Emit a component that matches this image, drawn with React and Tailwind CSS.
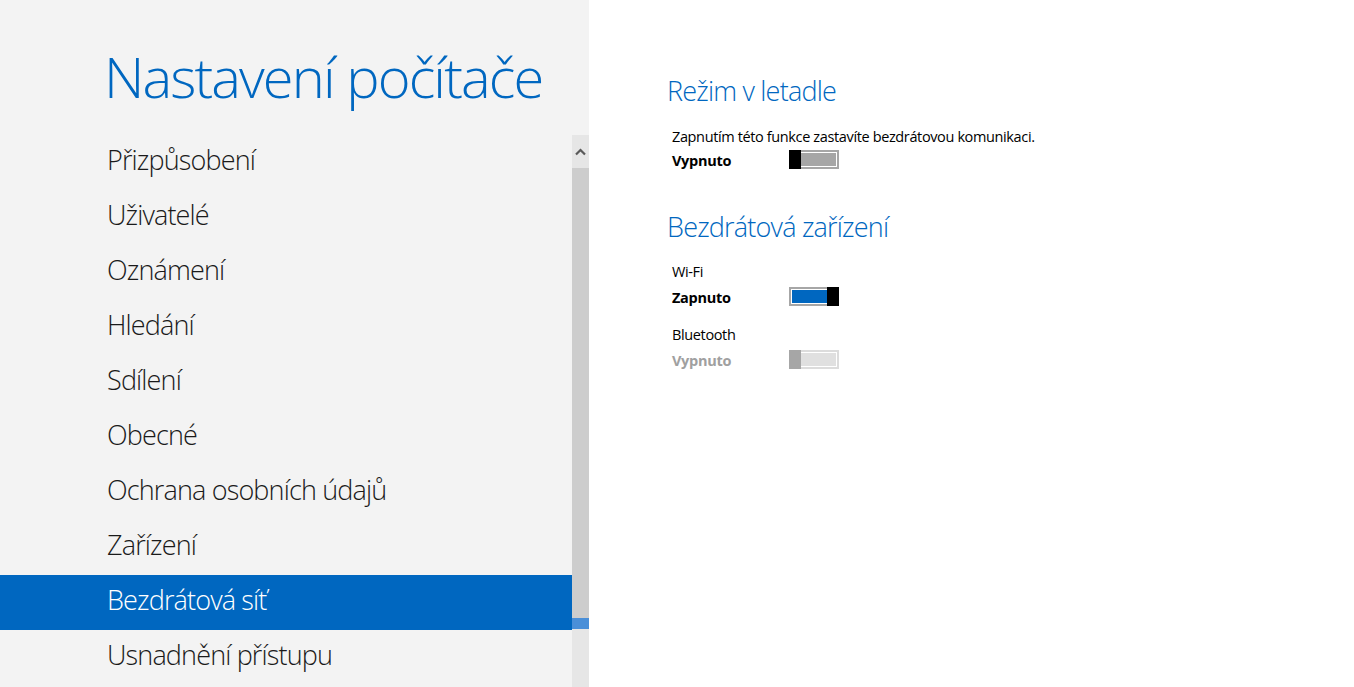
import React from "react";

const navItems = [
  "Přizpůsobení",
  "Uživatelé",
  "Oznámení",
  "Hledání",
  "Sdílení",
  "Obecné",
  "Ochrana osobních údajů",
  "Zařízení",
  "Bezdrátová síť",
  "Usnadnění přístupu",
];

function Toggle({ on, disabled }) {
  const border = disabled ? "border-[#dcdcdc]" : "border-[#a6a6a6]";
  const thumb = disabled ? "bg-[#a6a6a6]" : "bg-black";
  const fill = on ? "bg-[#0067c0]" : disabled ? "bg-[#e0e0e0]" : "bg-[#a6a6a6]";
  if (on) {
    return (
      <div className="flex h-[19px] w-[50px]">
        <div className={`flex-1 border-2 border-r-0 ${border} bg-white py-[1px] pl-[1px]`}>
          <div className={`h-full w-full ${fill}`} />
        </div>
        <div className={`h-full w-[12px] ${thumb}`} />
      </div>
    );
  }
  return (
    <div className="flex h-[19px] w-[50px]">
      <div className={`h-full w-[12px] ${thumb}`} />
      <div className={`flex-1 border-2 border-l-0 ${border} bg-white py-[1px] pr-[1px]`}>
        <div className={`h-full w-full ${fill}`} />
      </div>
    </div>
  );
}

function Row({ label, on, disabled }) {
  return (
    <div className="flex items-start pl-[83px]">
      <div
        className={`w-[117px] pt-[1px] text-[14.5px] leading-[20px] tracking-[-0.3px] font-bold ${
          disabled ? "text-[#a0a0a0]" : "text-black"
        }`}
      >
        {label}
      </div>
      <Toggle on={on} disabled={disabled} />
    </div>
  );
}

export default function App() {
  return (
    <div
      className="flex h-[687px] w-[1354px] overflow-hidden bg-white"
      style={{ fontFamily: '"Open Sans", "Noto Sans", sans-serif' }}
    >
      {/* Left panel */}
      <div className="flex w-[589px] shrink-0 flex-col bg-[#f3f3f3]">
        <div className="h-[135px] shrink-0 pl-[104px] pt-[48px]">
          <h1 className="text-[56px] leading-[56px] tracking-[-1.9px] font-light text-[#0067c0]">
            Nastavení počítače
          </h1>
        </div>
        <div className="flex flex-1">
          <ul className="flex-1">
            {navItems.map((item) => {
              const sel = item === "Bezdrátová síť";
              return (
                <li
                  key={item}
                  className={`h-[55px] pl-[107px] pt-[11px] text-[27px] leading-[27px] tracking-[-0.85px] font-light ${
                    sel ? "bg-[#0067c0] text-white" : "text-[#1a1a1a]"
                  }`}
                >
                  {item}
                </li>
              );
            })}
          </ul>
          <div className="flex w-[17px] flex-col bg-[#e6e6e6]">
            <div className="flex h-[33px] items-center justify-center">
              <svg width="11" height="8" viewBox="0 0 11 8">
                <path d="M1 6.5 L5.5 2 L10 6.5" fill="none" stroke="#5a5a5a" strokeWidth="2.2" />
              </svg>
            </div>
            <div className="h-[450px] bg-[#cdcdcd]" />
            <div className="h-[11px] bg-[#4a8fd8]" />
          </div>
        </div>
      </div>

      {/* Right panel */}
      <div className="flex-1">
        <h2 className="mt-[77px] pl-[78px] text-[27px] leading-[27px] tracking-[-0.8px] font-light text-[#0067c0]">
          Režim v letadle
        </h2>
        <p className="mt-[23px] pl-[83px] text-[14.5px] leading-[20px] tracking-[-0.37px] text-black">
          Zapnutím této funkce zastavíte bezdrátovou komunikaci.
        </p>
        <div className="mt-[3px]">
          <Row label="Vypnuto" />
        </div>
        <h2 className="mt-[42px] pl-[78px] text-[27px] leading-[27px] tracking-[-0.8px] font-light text-[#0067c0]">
          Bezdrátová zařízení
        </h2>
        <p className="mt-[22px] pl-[83px] text-[14.5px] leading-[20px] tracking-[-0.37px] text-black">Wi-Fi</p>
        <div className="mt-[5px]">
          <Row label="Zapnuto" on />
        </div>
        <p className="mt-[17px] pl-[83px] text-[14.5px] leading-[20px] tracking-[-0.37px] text-black">Bluetooth</p>
        <div className="mt-[5px]">
          <Row label="Vypnuto" disabled />
        </div>
      </div>
    </div>
  );
}
